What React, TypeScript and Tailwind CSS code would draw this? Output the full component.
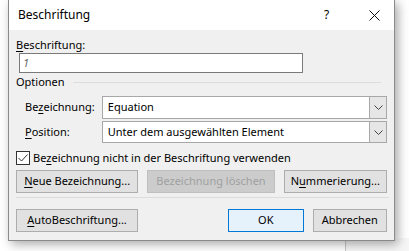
import React from "react";

const font = { fontFamily: '"Noto Sans", "Liberation Sans", sans-serif' };

function U({ children }: { children: React.ReactNode }) {
  return <span className="underline underline-offset-2">{children}</span>;
}

function Chevron() {
  return (
    <svg width="9" height="5" viewBox="0 0 9 5" fill="none">
      <path d="M0.5 0.5 L4.5 4.5 L8.5 0.5" stroke="#444" strokeWidth="1" />
    </svg>
  );
}

function Select({ value, height }: { value: string; height: string }) {
  return (
    <div className={`flex ${height} w-[286px] border border-[#a8a8a8] bg-white`}>
      <div className="flex flex-1 items-center pl-[5px] text-[11px] text-black">{value}</div>
      <div className="flex w-[17px] items-center justify-center border-l border-[#a8a8a8] bg-[#e6e6e6]">
        <Chevron />
      </div>
    </div>
  );
}

function Button({
  children,
  width,
  variant = "normal",
  className = "",
}: {
  children: React.ReactNode;
  width: string;
  variant?: "normal" | "disabled" | "default";
  className?: string;
}) {
  const styles = {
    normal: "border-[#adadad] bg-[#e1e1e1] text-black",
    disabled: "border-[#bfbfbf] bg-[#cccccc] text-[#a0a0a0]",
    default: "border-[#0078d7] bg-[#e5f1fb] text-black",
  }[variant];
  return (
    <div className={`flex h-[23px] ${width} items-center justify-center border text-[11px] ${styles} ${className}`}>
      {children}
    </div>
  );
}

export default function App() {
  return (
    <div className="relative h-[251px] w-[409px] overflow-hidden bg-white" style={font}>
      <div className="absolute left-[345px] top-[238px] h-[20px] border-l border-[#c8c8c8]" />
      <div className="absolute left-[346px] top-[238px] h-[20px] w-[70px] bg-[#f6f6f6]" />
      <div className="relative ml-[8px] w-[387px] border-x border-b border-[#8a8a8a] bg-[#f0f0f0] shadow-[3px_3px_10px_rgba(0,0,0,0.35)]">
        <div className="flex h-[30px] items-center bg-white pl-[9px] text-[12px] text-black">
          <span className="flex-1">Beschriftung</span>
          <span className="w-[45px] text-[12px]">?</span>
          <svg width="11" height="11" viewBox="0 0 11 11" className="mr-[14px]">
            <path d="M0.5 0.5 L10.5 10.5 M10.5 0.5 L0.5 10.5" stroke="#111" strokeWidth="1" />
          </svg>
        </div>

        <div className="px-[7px]">
          <div className="mt-[7px] h-[16px] text-[11px] leading-[16px] text-black">
            <U>B</U>eschriftung:
          </div>
          <div className="ml-[3px] flex h-[20px] w-[284px] items-center border border-[#7a7a7a] bg-white pl-[3px] text-[11px] italic text-[#6d6d6d]">
            1
          </div>

          <div className="mt-[1px] flex h-[16px] items-center text-[11px] text-black">
            <span>Optionen</span>
            <div className="ml-[8px] mr-[6px] h-px flex-1 bg-[#dcdcdc]" />
          </div>

          <div className="mt-[6px] flex items-center">
            <span className="w-[86px] pl-[9px] text-[11px] text-black">
              Be<U>z</U>eichnung:
            </span>
            <Select value="Equation" height="h-[23px]" />
          </div>
          <div className="mt-[2px] flex items-center">
            <span className="w-[86px] pl-[9px] text-[11px] text-black">
              <U>P</U>osition:
            </span>
            <Select value="Unter dem ausgewählten Element" height="h-[22px]" />
          </div>

          <div className="mt-[8px] flex h-[14px] items-center">
            <div className="flex h-[14px] w-[14px] items-center justify-center border border-[#333] bg-white">
              <svg width="10" height="8" viewBox="0 0 10 8" fill="none">
                <path d="M0.5 4 L3.5 7 L9.5 0.5" stroke="#333" strokeWidth="1" />
              </svg>
            </div>
            <span className="ml-[3px] text-[11px] text-black">
              Be<U>z</U>eichnung nicht in der Beschriftung verwenden
            </span>
          </div>

          <div className="mt-[5px] flex">
            <Button width="w-[123px]">
              <span>
                <U>N</U>eue Bezeichnung...
              </span>
            </Button>
            <Button width="w-[128px]" variant="disabled" className="ml-[9px]">
              Bezeichnung löschen
            </Button>
            <Button width="w-[104px]" className="ml-[9px]">
              <span>
                N<U>u</U>mmerierung...
              </span>
            </Button>
          </div>

          <div className="mt-[4px] h-px w-[373px] bg-[#dcdcdc]" />

          <div className="mt-[11px] flex pb-[8px]">
            <Button width="w-[123px]">
              <span>
                <U>A</U>utoBeschriftung...
              </span>
            </Button>
            <Button width="w-[76px]" variant="default" className="ml-[90px]">
              OK
            </Button>
            <Button width="w-[75px]" className="ml-[9px]">
              Abbrechen
            </Button>
          </div>
        </div>
      </div>
    </div>
  );
}
